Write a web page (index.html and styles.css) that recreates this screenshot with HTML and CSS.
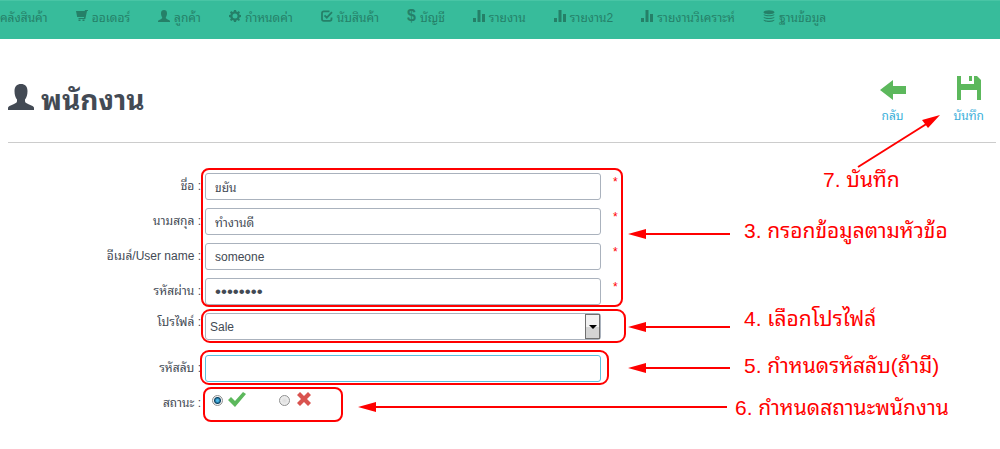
FILE: index.html
```html
<!DOCTYPE html>
<html lang="th">
<head>
<meta charset="utf-8">
<meta name="viewport" content="width=device-width, initial-scale=1">
<title>พนักงาน</title>
<link rel="stylesheet" href="styles.css">
</head>
<body>
<svg class="sprite" aria-hidden="true">
  <symbol id="user" viewBox="0 0 26 26"><path d="M13 0C9 0 6.500 2.500 6.500 7c0 4 1 6.500 2.500 8.500V17c0 1.500-1 2-3 3l-4.500 2C.5 22.500 0 23.300 0 24v2h26v-2c0-.7-.5-1.500-1.500-2L20 20c-2-1-3-1.500-3-3v-1.500c1.500-2 2.500-4.500 2.500-8.500C19.500 2.500 17 0 13 0z"/></symbol>
  <symbol id="cart" viewBox="0 0 12 12"><path d="M0 1h8.500l.8-1H12v1h-1L9.300 9H2.500V8H8l.2-1H1.200zM2.500 9.500h2V11h-2zM6.500 9.500h2V11h-2z"/></symbol>
  <symbol id="gear" viewBox="0 0 12 12"><path fill-rule="evenodd" d="M5 0h2l.4 1.600 1 .4L9.800 1.100l1.200 1.300-.9 1.300.4 1L12 5v2l-1.500.4-.4 1 .9 1.300-1.200 1.200-1.400-.8-1 .4L7 12H5l-.4-1.500-1-.4-1.400.8L1 9.700l.9-1.300-.4-1L0 7V5l1.500-.3.4-1L1 2.400l1.200-1.300 1.400.9 1-.4zM6 3.500a2.500 2.500 0 1 0 0 5 2.500 2.500 0 0 0 0-5z"/></symbol>
  <symbol id="check-box" viewBox="0 0 12 12"><path d="M8.500 1.300H2.800Q1 1.300 1 3v6q0 1.800 1.800 1.800h6Q10.500 10.800 10.500 9V7.500M3.500 5.300l2.300 2.400L11 2.200" fill="none" stroke="currentColor" stroke-width="1.800"/></symbol>
  <symbol id="bars" viewBox="0 0 12 12"><path d="M0 8h3v4H0zM4.500 0h3v12h-3zM9 4h3v8H9z"/></symbol>
  <symbol id="database" viewBox="0 0 12 12"><path d="M.5 2.200C.5-.5 11.500-.5 11.500 2.200S.5 4.800.5 2.200zM.5 4.200q5.500 2 11 0C11.500 7 .5 7 .5 4.200zM.5 7q5.500 2 11 0c0 2.800-11 2.800-11 0zM.5 9.700q5.500 2 11 0c0 3-11 3-11 0z"/></symbol>
</svg>

<nav class="navbar">
  <a class="nav-item" href="#">คลังสินค้า</a>
  <a class="nav-item" href="#"><svg class="nav-icon"><use href="#cart"/></svg>ออเดอร์</a>
  <a class="nav-item" href="#"><svg class="nav-icon"><use href="#user"/></svg>ลูกค้า</a>
  <a class="nav-item" href="#"><svg class="nav-icon"><use href="#gear"/></svg>กำหนดค่า</a>
  <a class="nav-item" href="#"><svg class="nav-icon"><use href="#check-box"/></svg>นับสินค้า</a>
  <a class="nav-item" href="#"><span class="dollar">$</span>บัญชี</a>
  <a class="nav-item" href="#"><svg class="nav-icon"><use href="#bars"/></svg>รายงาน</a>
  <a class="nav-item" href="#"><svg class="nav-icon"><use href="#bars"/></svg>รายงาน2</a>
  <a class="nav-item" href="#"><svg class="nav-icon"><use href="#bars"/></svg>รายงานวิเคราะห์</a>
  <a class="nav-item" href="#"><svg class="nav-icon"><use href="#database"/></svg>ฐานข้อมูล</a>
</nav>

<main class="page">
  <header class="page-header">
    <h1 class="title"><svg class="title-icon"><use href="#user"/></svg>พนักงาน</h1>
    <div class="actions">
      <a class="action" href="#"><svg class="action-icon" viewBox="0 0 26 26"><path d="M0 15 13 5v6h13v8H13v6z"/></svg>กลับ</a>
      <button class="action" type="submit" form="employee"><svg class="action-icon" viewBox="0 0 26 26"><path fill-rule="evenodd" d="M1 1h4v8h13V1h3l4 4v20h-4V15H5v10H1zM13 1h3v5h-3z"/></svg>บันทึก</button>
    </div>
  </header>

  <form class="form" id="employee">
    <div class="row"><label class="label" for="first">ชื่อ :</label><input class="field" id="first" type="text" value="ขยัน"><span class="required">*</span></div>
    <div class="row"><label class="label" for="last">นามสกุล :</label><input class="field" id="last" type="text" value="ทำงานดี"><span class="required">*</span></div>
    <div class="row"><label class="label" for="email">อีเมล์/User name :</label><input class="field" id="email" type="text" value="someone"><span class="required">*</span></div>
    <div class="row"><label class="label" for="password">รหัสผ่าน :</label><input class="field password" id="password" type="password" value="password"><span class="required">*</span></div>
    <div class="row profile"><label class="label" for="profile">โปรไฟล์ :</label>
      <div class="select-wrap"><select class="field select" id="profile"><option>Sale</option></select><span class="select-button"></span></div>
    </div>
    <div class="row"><label class="label" for="secret">รหัสลับ :</label><input class="field active" id="secret" type="password"></div>
    <div class="row" role="radiogroup" aria-labelledby="status"><span class="label" id="status">สถานะ :</span>
      <div class="choices">
        <label class="choice"><input class="radio" type="radio" name="status" aria-label="เปิด" checked><svg class="choice-icon yes" viewBox="0 0 18 16"><path d="M0 9l3-3 4 4 8-9 3 2L7 16z"/></svg></label>
        <label class="choice"><input class="radio" type="radio" name="status" aria-label="ปิด"><svg class="choice-icon no" viewBox="0 0 18 16"><path d="M2 4l3-3 4 4 4-4 3 3-4 4 4 4-3 3-4-4-4 4-3-3 4-4z"/></svg></label>
      </div>
    </div>
  </form>
</main>

<svg class="marks" width="1000" height="449" aria-hidden="true">
  <g class="frames">
    <rect x="202" y="169" width="420" height="137" rx="7"/>
    <rect x="202" y="310" width="423" height="32" rx="8"/>
    <rect x="201" y="351" width="407" height="33" rx="8"/>
    <rect x="204" y="388" width="138" height="33" rx="7"/>
    <path d="M640 234h90M640 327h90M640 368h90M370 407h357M858 167l70-44"/>
  </g>
  <path class="heads" d="M628 234l18-5v10zM628 327l18-5v10zM628 368l18-5v10zM358 407l18-5v10zM940 115l-12 13-6-8z"/>
</svg>
<p class="note note-save">7. บันทึก</p>
<p class="note note-fill">3. กรอกข้อมูลตามหัวข้อ</p>
<p class="note note-profile">4. เลือกโปรไฟล์</p>
<p class="note note-secret">5. กำหนดรหัสลับ(ถ้ามี)</p>
<p class="note note-status">6. กำหนดสถานะพนักงาน</p>
</body>
</html>
```

FILE: styles.css
```css
* { box-sizing: border-box; }
body {
  margin: 0;
  background: #fff;
  color: #434a54;
  font-family: "Liberation Sans", "Noto Sans Thai Looped", "Loma", "Waree", "Noto Sans Thai", sans-serif;
  font-size: 12px;
}
.sprite { position: absolute; width: 0; height: 0; }
svg { fill: currentColor; }

.navbar {
  display: flex;
  gap: 28px;
  height: 39px;
  padding-top: 5px;
  background: #37bc9b;
  border-top: 1px solid #48c5a5;
  overflow: hidden;
}
.nav-item {
  display: flex;
  align-items: center;
  gap: 4px;
  height: 20px;
  color: #258068;
  white-space: nowrap;
  text-decoration: none;
}
.nav-icon { width: 12px; height: 12px; }
.dollar { font-size: 16px; font-weight: bold; }

.page { padding: 0 4px 0 8px; }
.page-header {
  display: flex;
  justify-content: space-between;
  height: 104px;
  padding: 36px 12px 0 0;
  border-bottom: 1px solid #ccc;
}
.title {
  display: flex;
  align-items: center;
  gap: 7px;
  height: 44px;
  margin: 0;
  font-size: 28px;
}
.title-icon { width: 26px; height: 26px; }
.actions { display: flex; gap: 48px; align-items: flex-start; }
.action {
  display: flex;
  flex-direction: column;
  align-items: center;
  gap: 4px;
  padding: 0;
  border: 0;
  background: none;
  color: #3bafda;
  font: inherit;
  text-decoration: none;
}
.action-icon { width: 26px; height: 26px; color: #5cb85c; }

.form {
  display: flex;
  flex-direction: column;
  gap: 8px;
  padding-top: 30px;
}
.row {
  display: grid;
  grid-template-columns: 193px minmax(0, 396px) 20px;
  column-gap: 4px;
}
.profile { padding-bottom: 7px; }
.label { line-height: 26px; text-align: right; white-space: nowrap; }
.profile .label { line-height: 18px; }
.field {
  width: 100%;
  height: 27px;
  padding: 0 9px;
  border: 1px solid #aab2bd;
  border-radius: 3px;
  background: #fff;
  color: #434a54;
  font: inherit;
  outline: 0;
}
.password { font-size: 17px; }
.active { border-color: #5bc0de; }
.required { padding-left: 8px; color: #f00; line-height: 18px; }
.select-wrap { position: relative; }
.select { padding: 0 4px; appearance: none; }
.select-button {
  position: absolute;
  top: 1px;
  right: 1px;
  display: grid;
  place-items: center;
  width: 15px;
  height: 25px;
  border: 1px solid #707070;
  background: linear-gradient(#f2f2f2 50%, #d4d4d4 50%);
  pointer-events: none;
}
.select-button::after {
  content: "";
  border: 4px solid transparent;
  border-top: 4px solid #000;
  border-bottom: 0;
}
.choices { display: flex; gap: 33px; padding-left: 7px; }
.choice { display: flex; align-items: flex-start; gap: 5px; padding-top: 1px; }
.radio {
  width: 11px;
  height: 11px;
  margin: 4px 0 0;
  appearance: none;
  border: 1px solid #8e8f8f;
  border-radius: 50%;
  background: radial-gradient(#ddd, #f6f6f6);
}
.radio:checked { background: radial-gradient(circle, #4bb8e8 1px, #0b4263 3px, #f4f4f4 4px); }
.choice-icon { width: 18px; height: 16px; }
.yes { color: #5cb85c; }
.no { color: #d9534f; }

.marks { position: absolute; top: 0; left: 0; pointer-events: none; }
.frames { fill: none; stroke: #f00; stroke-width: 2; }
.heads { fill: #f00; }
.note {
  position: absolute;
  margin: 0;
  color: #f00;
  font-size: 21px;
  line-height: 24px;
  white-space: nowrap;
}
.note-save { top: 168px; left: 823px; }
.note-fill { top: 219px; left: 744px; }
.note-profile { top: 307px; left: 744px; }
.note-secret { top: 354px; left: 744px; }
.note-status { top: 396px; left: 735px; }
```
